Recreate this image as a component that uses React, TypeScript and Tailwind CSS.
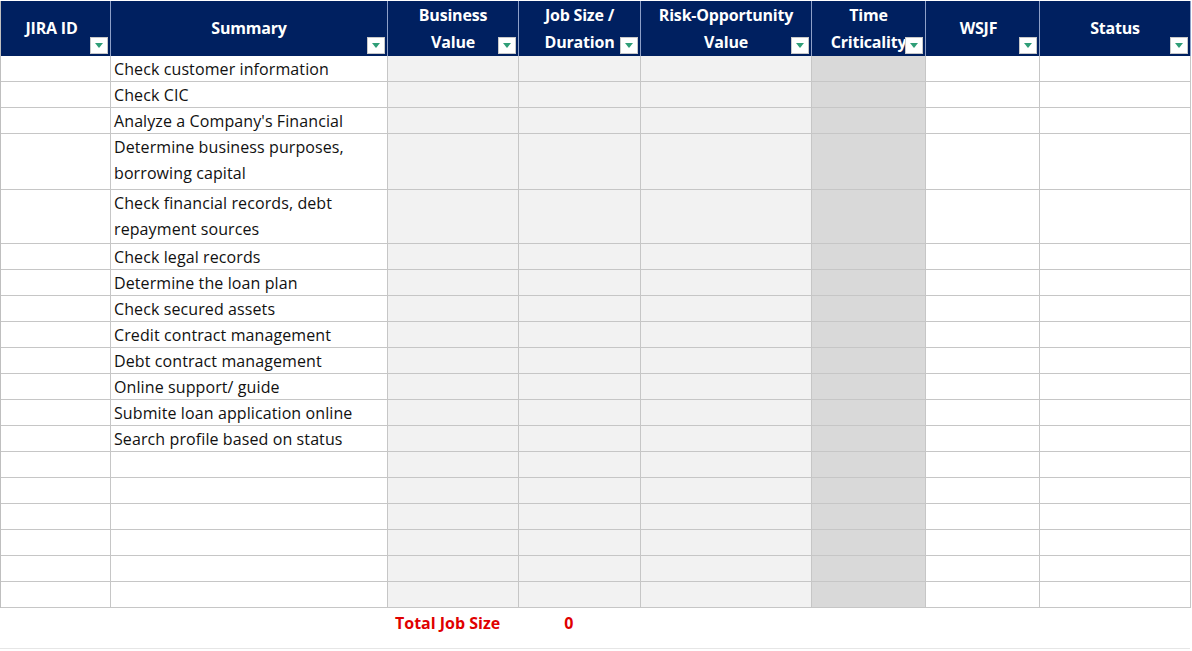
import React from 'react';

const HEADERS = [
  { label: ['JIRA ID'], align: 'top' },
  { label: ['Summary'] },
  { label: ['Business', 'Value'] },
  { label: ['Job Size /', 'Duration'] },
  { label: ['Risk-Opportunity', 'Value'] },
  { label: ['Time', 'Criticality'] },
  { label: ['WSJF'], align: 'top' },
  { label: ['Status'] },
];

const ROWS: [string, number][] = [
  ['Check customer information', 26],
  ['Check CIC', 26],
  ["Analyze a Company's Financial", 26],
  ['Determine business purposes, borrowing capital', 56],
  ['Check financial records, debt repayment sources', 54],
  ['Check legal records', 26],
  ['Determine the loan plan', 26],
  ['Check secured assets', 26],
  ['Credit contract management', 26],
  ['Debt contract management', 26],
  ['Online support/ guide', 26],
  ['Submite loan application online', 26],
  ['Search profile based on status', 26],
  ['', 26],
  ['', 26],
  ['', 26],
  ['', 26],
  ['', 26],
  ['', 26],
];

const COLS = 'grid grid-cols-[110px_277px_131px_122px_171px_114px_114px_151px]';

const Filter = () => (
  <span className="absolute right-[2px] bottom-[2px] w-[18px] h-[17px] bg-white border border-[#c8c8c8] flex items-center justify-center">
    <svg width="8" height="5" viewBox="0 0 8 5"><path d="M0 0h8L4 5z" fill="#2f9e77" /></svg>
  </span>
);

export default function App() {
  const cellBg = ['bg-white', 'bg-white', 'bg-[#f2f2f2]', 'bg-[#f2f2f2]', 'bg-[#f2f2f2]', 'bg-[#d9d9d9]', 'bg-white', 'bg-white'];
  return (
    <div className="w-[1192px] h-[651px] bg-white pt-[1px]" style={{ fontFamily: '"Open Sans", sans-serif' }}>
      <div className={`${COLS} w-[1190px] border-l border-[#bfbfbf]`}>
        {HEADERS.map((h, i) => (
          <div key={i} className={`relative h-[55px] bg-[#002060] text-white font-bold text-[16px] leading-[27px] tracking-[-0.2px] border-r border-[#8ea0c8] flex flex-col items-center ${h.align === 'top' ? 'justify-start pt-[14px] pr-[8px]' : 'justify-center'}`}>
            {h.label.map((l) => <span key={l} className="whitespace-nowrap">{l}</span>)}
            <Filter />
          </div>
        ))}
        {ROWS.map(([text, hgt], r) =>
          cellBg.map((bg, c) => (
            <div key={`${r}-${c}`} style={{ height: hgt }} className={`${bg} border-r border-b border-[#c6c6c6] ${c === 1 ? 'px-[3px] text-[16px] leading-[26px] text-[#111] tracking-[0.1px]' : ''}`}>
              {c === 1 ? text : null}
            </div>
          ))
        )}
      </div>
      <div className={`${COLS} w-[1190px] h-[30px] items-center text-[#e00000] font-bold text-[16px]`}>
        <div /><div />
        <div className="col-span-2 flex">
          <span className="ml-[8px]">Total Job Size</span>
          <span className="ml-[64px]">0</span>
        </div>
      </div>
      <div className="h-[10px]" />
      <div className="w-[1190px] border-b border-[#e6e6e6]" />
    </div>
  );
}
